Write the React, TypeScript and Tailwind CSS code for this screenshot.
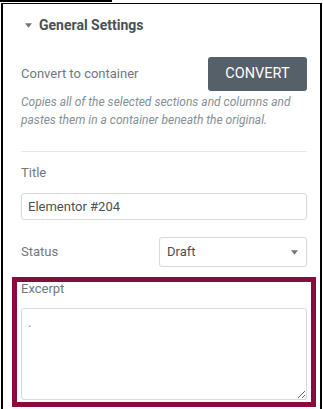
import React from "react"

function Caret({ className }: { className?: string }) {
  return (
    <svg viewBox="0 0 8 5" className={className} aria-hidden>
      <polygon points="0,0 8,0 4,5" fill="currentColor" />
    </svg>
  )
}

export default function App() {
  return (
    <div className="w-[323px] h-[409px] overflow-hidden bg-white font-['Roboto',sans-serif]">
      {/* cut-off tab above the panel */}
      <div className="h-[2px] w-[112px] bg-black" />
      <div className="mt-px ml-px w-[321px] h-[406px] border-t border-l-2 border-r-2 border-black pl-[9px] pr-[4px]">
        {/* Section header */}
        <div className="px-[9px] pt-[11px] flex items-center h-[31px] text-[#495157]">
          <Caret className="w-[7px] h-[5px] ml-[4px] mr-[7px] text-[#6d7882]" />
          <span className="text-[14px] font-bold leading-5">General Settings</span>
        </div>

        {/* Convert row */}
        <div className="px-[9px] mt-[22px]">
          <div className="flex items-center justify-between">
            <span className="text-[13px] text-[#6d7882]">Convert to container</span>
            <button className="w-[99px] h-[34px] rounded-[3px] bg-[#556068] text-white text-[14.5px] font-normal">
              CONVERT
            </button>
          </div>
          <p className="mt-[2px] text-[12px] italic leading-[18px] text-[#858f97]">
            Copies all of the selected sections and columns and pastes them in a container beneath the original.
          </p>
          <div className="mt-[22px] border-t border-[#e6e9ec]" />
        </div>

        {/* Title */}
        <div className="px-[9px] mt-[13px]">
          <label className="block text-[13px] leading-4 text-[#6d7882]">Title</label>
          <input
            readOnly
            value="Elementor #204"
            className="mt-[12px] w-full h-[27px] rounded-[3px] border border-[#d5dadf] px-[6px] text-[13px] text-[#495157] outline-none"
          />
        </div>

        {/* Status */}
        <div className="px-[9px] mt-[17px] flex items-center justify-between">
          <span className="text-[13px] text-[#6d7882]">Status</span>
          <div className="w-[148px] h-[30px] rounded-[3px] border border-[#d5dadf] flex items-center justify-between pl-[7px] pr-[8px]">
            <span className="text-[13px] text-[#495157]">Draft</span>
            <Caret className="w-[7px] h-[5px] text-[#6d7882]" />
          </div>
        </div>

        {/* Excerpt (highlighted) */}
        <div className="mt-[10px] border-[5px] border-[#8c0b3e] px-[4px] pb-[2px]">
          <label className="block text-[13px] leading-[14px] text-[#6d7882]">Excerpt</label>
          <textarea
            readOnly
            value="."
            className="mt-[12px] block w-full h-[92px] rounded-[3px] border border-[#d5dadf] px-[6px] py-[6px] text-[13px] leading-4 text-[#7d878f] outline-none"
          />
        </div>
      </div>
    </div>
  )
}
